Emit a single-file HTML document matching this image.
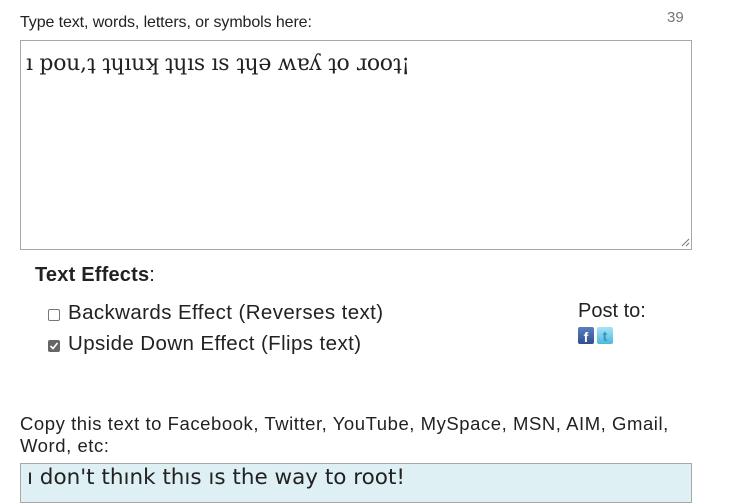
<!DOCTYPE html>
<html><head><meta charset="utf-8"><style>
body{margin:0;width:730px;height:496px;overflow:hidden;background:#fff;font-family:"Liberation Sans","DejaVu Sans",sans-serif;color:#222;position:relative}
.a{position:absolute;white-space:nowrap}
.box{position:absolute;border:1px solid #a8a8a8;box-sizing:border-box}
.cb{position:absolute;width:12px;height:12px;border:1px solid #777;border-radius:2px;box-sizing:border-box;background:#fff}
</style></head><body>
<div class="a" style="left:20px;top:14px;font-size:16px;letter-spacing:-0.1px">Type text, words, letters, or symbols here:</div>
<div class="a" style="left:667px;top:9px;font-size:15px;color:#777">39</div>
<div class="box" style="left:20px;top:40px;width:672px;height:210px"></div>
<div class="a" style="left:26px;top:51px;font-size:22px;font-family:'DejaVu Serif','Liberation Serif',serif;letter-spacing:-0.3px;color:#222">ı pou,ʇ ʇɥıuʞ ʇɥıs ıs ʇɥǝ ʍɐʎ ʇo ɹooʇ¡</div>
<svg class="a" style="left:680px;top:237px" width="10" height="10"><path d="M2 9L9 2M6 9L9 6" stroke="#777" stroke-width="1"/></svg>
<div class="a" style="left:35px;top:264px;font-size:20px;letter-spacing:0.2px"><b>Text Effects</b>:</div>
<div class="cb" style="left:48px;top:309px"></div>
<div class="a" style="left:68px;top:301px;font-size:20.5px;letter-spacing:0.4px">Backwards Effect (Reverses text)</div>
<div class="cb" style="left:48px;top:340px;background:#666;border-color:#666"></div>
<svg class="a" style="left:48px;top:340px" width="12" height="12"><path d="M2.5 6L5 8.5L9.5 3" stroke="#fff" stroke-width="1.6" fill="none"/></svg>
<div class="a" style="left:68px;top:332px;font-size:20.5px;letter-spacing:0.4px">Upside Down Effect (Flips text)</div>
<div class="a" style="left:578px;top:300px;font-size:20px;letter-spacing:0px">Post to:</div>
<div class="a" style="left:578px;top:327px;width:16px;height:17px;background:linear-gradient(#5a7fc0,#2f4f8f);border-radius:2px;color:#fff;font-weight:bold;font-size:14px;text-align:center;line-height:20px">f</div>
<div class="a" style="left:597px;top:327px;width:16px;height:17px;background:linear-gradient(#a6e4f7,#4cb8df);border-radius:2px;color:#3a90c0;font-weight:bold;font-size:14px;text-align:center;line-height:19px">t</div>
<div class="a" style="left:20px;top:413px;font-size:18.5px;letter-spacing:0.55px">Copy this text to Facebook, Twitter, YouTube, MySpace, MSN, AIM, Gmail,</div>
<div class="a" style="left:20px;top:435px;font-size:18.5px;letter-spacing:0.55px">Word, etc:</div>
<div class="box" style="left:20px;top:463px;width:672px;height:40px;background:#def0f3"></div>
<div class="a" style="left:27px;top:465px;font-size:21.5px;font-family:'DejaVu Sans',sans-serif;letter-spacing:0px">ı don't thınk thıs ıs the way to root!</div>
</body></html>
